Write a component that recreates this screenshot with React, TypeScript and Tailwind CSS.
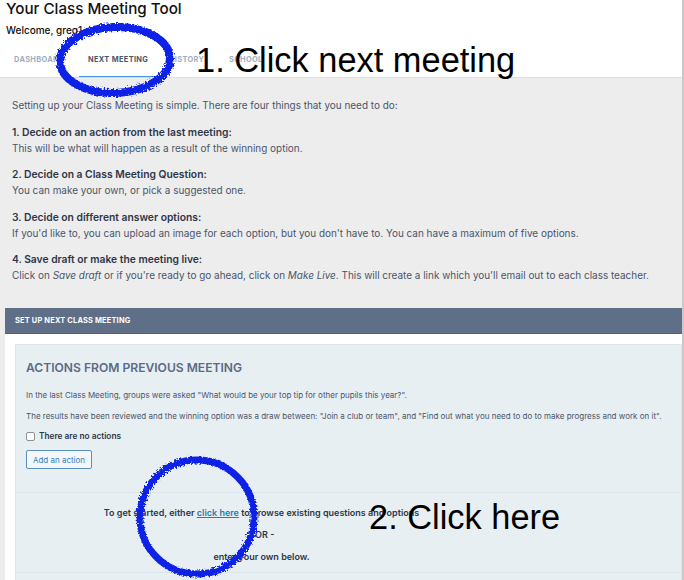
const font = { fontFamily: "Inter, sans-serif" };
const bigFont = { fontFamily: "Liberation Sans, sans-serif" };

function Step({ title, children }: { title: string; children: React.ReactNode }) {
  return (
    <div className="mt-[12.5px]">
      <p className="text-[10.3px] font-semibold text-[#2d3748]">{title}</p>
      <p className="mt-[2px]">{children}</p>
    </div>
  );
}

function Scribbles() {
  return (
    <svg className="absolute top-0 left-0 pointer-events-none" width="684" height="580" fill="none">
      <defs>
        <filter id="rough" x="-10%" y="-10%" width="120%" height="120%">
          <feTurbulence type="fractalNoise" baseFrequency="0.55" numOctaves="3" seed="7" />
          <feDisplacementMap in="SourceGraphic" scale="5" />
        </filter>
      </defs>
      <g filter="url(#rough)" stroke="#0a22e6">
        <ellipse cx="115" cy="60" rx="55" ry="33" strokeWidth="8" transform="rotate(-2 115 60)" />
        <circle cx="197" cy="517" r="57" strokeWidth="7" />
      </g>
    </svg>
  );
}

export default function App() {
  return (
    <div className="relative w-[684px] h-[580px] overflow-hidden bg-white text-[#1a202c]" style={font}>
      <div className="relative h-[78px] border-b border-[#d8dde6] bg-white">
        <h1 className="pl-[6px] text-[15.2px] leading-[18px] font-medium text-[#111]">Your Class Meeting Tool</h1>
        <p className="pl-[6px] mt-[5px] text-[10px] leading-[14px] font-medium text-[#111]">Welcome, greg1</p>
        <nav className="mt-[17px] flex pl-[14px] text-[7.4px] leading-[12px] font-bold tracking-[0.35px] uppercase text-[#a0aec0]">
          <span className="w-[74px]">Dashboard</span>
          <span className="w-[81px] text-[#4a5568]">Next Meeting</span>
          <span className="w-[60px]">History</span>
          <span>School</span>
        </nav>
        <div className="absolute bottom-0 left-[79px] w-[78px] h-[1.5px] bg-[#4299e1]" />
      </div>

      <div className="h-[502px] bg-[#ededee] pr-[2px]">
        <div className="px-[12px] pt-[20px] text-[9.95px] leading-[14px] text-[#4a5568]">
          <p className="mb-[2px]">Setting up your Class Meeting is simple. There are four things that you need to do:</p>
          <Step title="1. Decide on an action from the last meeting:">
            This will be what will happen as a result of the winning option.
          </Step>
          <Step title="2. Decide on a Class Meeting Question:">You can make your own, or pick a suggested one.</Step>
          <Step title="3. Decide on different answer options:">
            If you'd like to, you can upload an image for each option, but you don't have to. You can have a maximum of five options.
          </Step>
          <Step title="4. Save draft or make the meeting live:">
            Click on <em>Save draft</em> or if you're ready to go ahead, click on <em>Make Live</em>. This will create a link which you'll email out to each class teacher.
          </Step>
        </div>

        <div className="mt-[26px] ml-[5px] bg-white">
          <div className="h-[26px] flex items-center pl-[10px] bg-[#5f6f88] border-b border-[#4f6079] text-[7.4px] font-bold tracking-[0.2px] uppercase text-white">
            Set up next class meeting
          </div>
          <div className="pt-[10px] pl-[10px] h-[300px]">
            <div className="h-[290px] bg-[#e8eff3] border border-[#dce6ea] pt-[14px] px-[10px] text-[8px] leading-[12px] text-[#4a5568]">
              <h2 className="text-[12.1px] leading-[18px] font-semibold text-[#5a6b85] uppercase">Actions from previous meeting</h2>
              <p className="mt-[12px]">In the last Class Meeting, groups were asked "What would be your top tip for other pupils this year?".</p>
              <p className="mt-[9px] whitespace-nowrap">The results have been reviewed and the winning option was a draw between: "Join a club or team", and "Find out what you need to do to make progress and work on it".</p>
              <label className="mt-[8px] flex items-center gap-[4px] text-[8.3px] font-semibold text-[#2d3748]">
                <span className="w-[9px] h-[9px] rounded-[2px] border border-[#8a8f98] bg-white" />
                There are no actions
              </label>
              <button className="mt-[8px] block h-[19px] w-[66px] rounded-[2px] border border-[#5a8fb8] bg-[#f3f7f9] text-[#3a7fb5]">
                Add an action
              </button>
              <div className="mt-[23px] -mx-[10px] border-t border-[#dbe5ec] pt-[14px] text-center text-[9px] font-semibold text-[#2d3748]">
                <p className="pr-[174px]">
                  To get started, either <a className="underline text-[#2b7bad]">click here</a> to browse existing questions and options
                </p>
                <p className="mt-[10px] pr-[174px]">- OR -</p>
                <p className="mt-[10px] pr-[174px]">enter your own below.</p>
              </div>
              <div className="mt-[9px] -mx-[10px] border-t border-[#dbe5ec]" />
            </div>
          </div>
        </div>
      </div>

      <span className="absolute left-[196px] top-[39px] text-[34.4px] leading-[42px] text-black" style={bigFont}>
        1. Click next meeting
      </span>
      <span className="absolute left-[369px] top-[496px] text-[34.4px] leading-[42px] text-black" style={bigFont}>
        2. Click here
      </span>
      <Scribbles />
      <div className="absolute top-0 right-0 w-[2px] h-full bg-[#c9c9cc]" />
    </div>
  );
}
